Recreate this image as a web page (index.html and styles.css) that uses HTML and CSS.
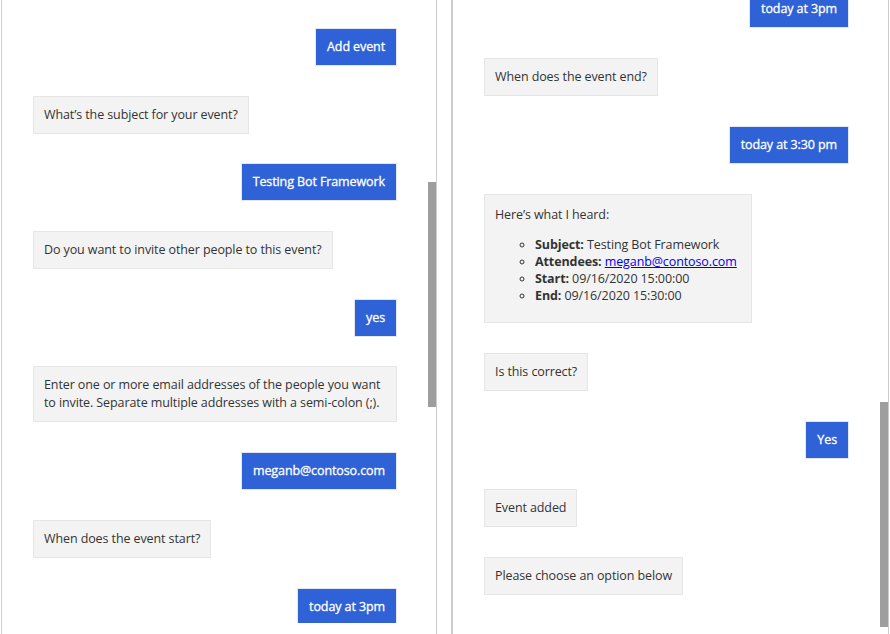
FILE: index.html
```html
<!DOCTYPE html>
<html lang="en">
<head>
<meta charset="utf-8">
<title>Bot conversation</title>
<link rel="stylesheet" href="styles.css">
</head>
<body>
<div class="app">
  <section class="pane pane-left">
    <div class="transcript transcript-left">
      <div class="bubble user">Add event</div>
      <div class="bubble bot">What’s the subject for your event?</div>
      <div class="bubble user">Testing Bot Framework</div>
      <div class="bubble bot">Do you want to invite other people to this event?</div>
      <div class="bubble user">yes</div>
      <div class="bubble bot">Enter one or more email addresses of the people you want to invite. Separate multiple addresses with a semi-colon (;).</div>
      <div class="bubble user">meganb@contoso.com</div>
      <div class="bubble bot">When does the event start?</div>
      <div class="bubble user">today at 3pm</div>
    </div>
    <div class="thumb thumb-left"></div>
  </section>
  <section class="pane pane-right">
    <div class="transcript transcript-right">
      <div class="bubble user">today at 3pm</div>
      <div class="bubble bot">When does the event end?</div>
      <div class="bubble user">today at 3:30 pm</div>
      <div class="bubble bot card">
        <p class="card-title">Here’s what I heard:</p>
        <ul class="card-list">
          <li><strong>Subject:</strong> Testing Bot Framework</li>
          <li><strong>Attendees:</strong> <a href="#">meganb@contoso.com</a></li>
          <li><strong>Start:</strong> 09/16/2020 15:00:00</li>
          <li><strong>End:</strong> 09/16/2020 15:30:00</li>
        </ul>
      </div>
      <div class="bubble bot">Is this correct?</div>
      <div class="bubble user">Yes</div>
      <div class="bubble bot">Event added</div>
      <div class="bubble bot">Please choose an option below</div>
    </div>
    <div class="thumb thumb-right"></div>
  </section>
</div>
</body>
</html>
```

FILE: styles.css
```css
html, body {
  margin: 0;
  padding: 0;
  background: #ffffff;
}

body {
  font-family: "Open Sans", "Noto Sans", "Liberation Sans", sans-serif;
  font-size: 12.5px;
  letter-spacing: -0.1px;
  color: #333333;
}

.app {
  display: flex;
  height: 634px;
  overflow: hidden;
}

.pane {
  position: relative;
  box-sizing: border-box;
  height: 634px;
  border-right: 1px solid #cccccc;
}

.pane-left {
  margin-left: 1px;
  width: 436px;
  border-left: 1px solid #cccccc;
}

.pane-right {
  margin-left: 14px;
  width: 438px;
  border-left: 2px solid #cccccc;
}

.transcript {
  height: 623px;
  overflow: hidden;
  display: flex;
  flex-direction: column;
  gap: 30px;
  box-sizing: border-box;
}

.transcript-left {
  gap: 29.7px;
  padding: 28px 39px 0 31px;
}

.transcript-right {
  padding: 0 39px 0 31px;
}

.transcript-right > .bubble:first-child {
  margin-top: -10px;
}

.bubble {
  box-sizing: border-box;
  border: 1px solid #e6e6e6;
  padding: 9px 10px;
  line-height: 18px;
  max-width: 100%;
}

.bubble.bot {
  align-self: flex-start;
  background: #f3f3f3;
  color: #333333;
}

.bubble.user {
  align-self: flex-end;
  background: #2f62d6;
  color: #ffffff;
  font-weight: 400;
  -webkit-text-stroke: 0.3px #ffffff;
  border-color: #e3e7f0;
  padding-left: 11px;
  padding-right: 11px;
}

.card {
  padding-top: 11px;
  padding-bottom: 10px;
  min-width: 268px;
}

.card-title {
  margin: 0 0 12px;
}

.card-list {
  margin: 0 0 8px;
  padding-left: 40px;
  list-style: circle;
}

.card-list li {
  line-height: 17px;
}

.card-list strong {
  font-weight: 700;
}

.card-list a {
  color: #0000ee;
  text-decoration: underline;
}

.thumb {
  position: absolute;
  right: 0;
  width: 8px;
  background: #9e9e9e;
}

.thumb-left {
  top: 182px;
  height: 225px;
}

.thumb-right {
  top: 402px;
  height: 225px;
}
```
